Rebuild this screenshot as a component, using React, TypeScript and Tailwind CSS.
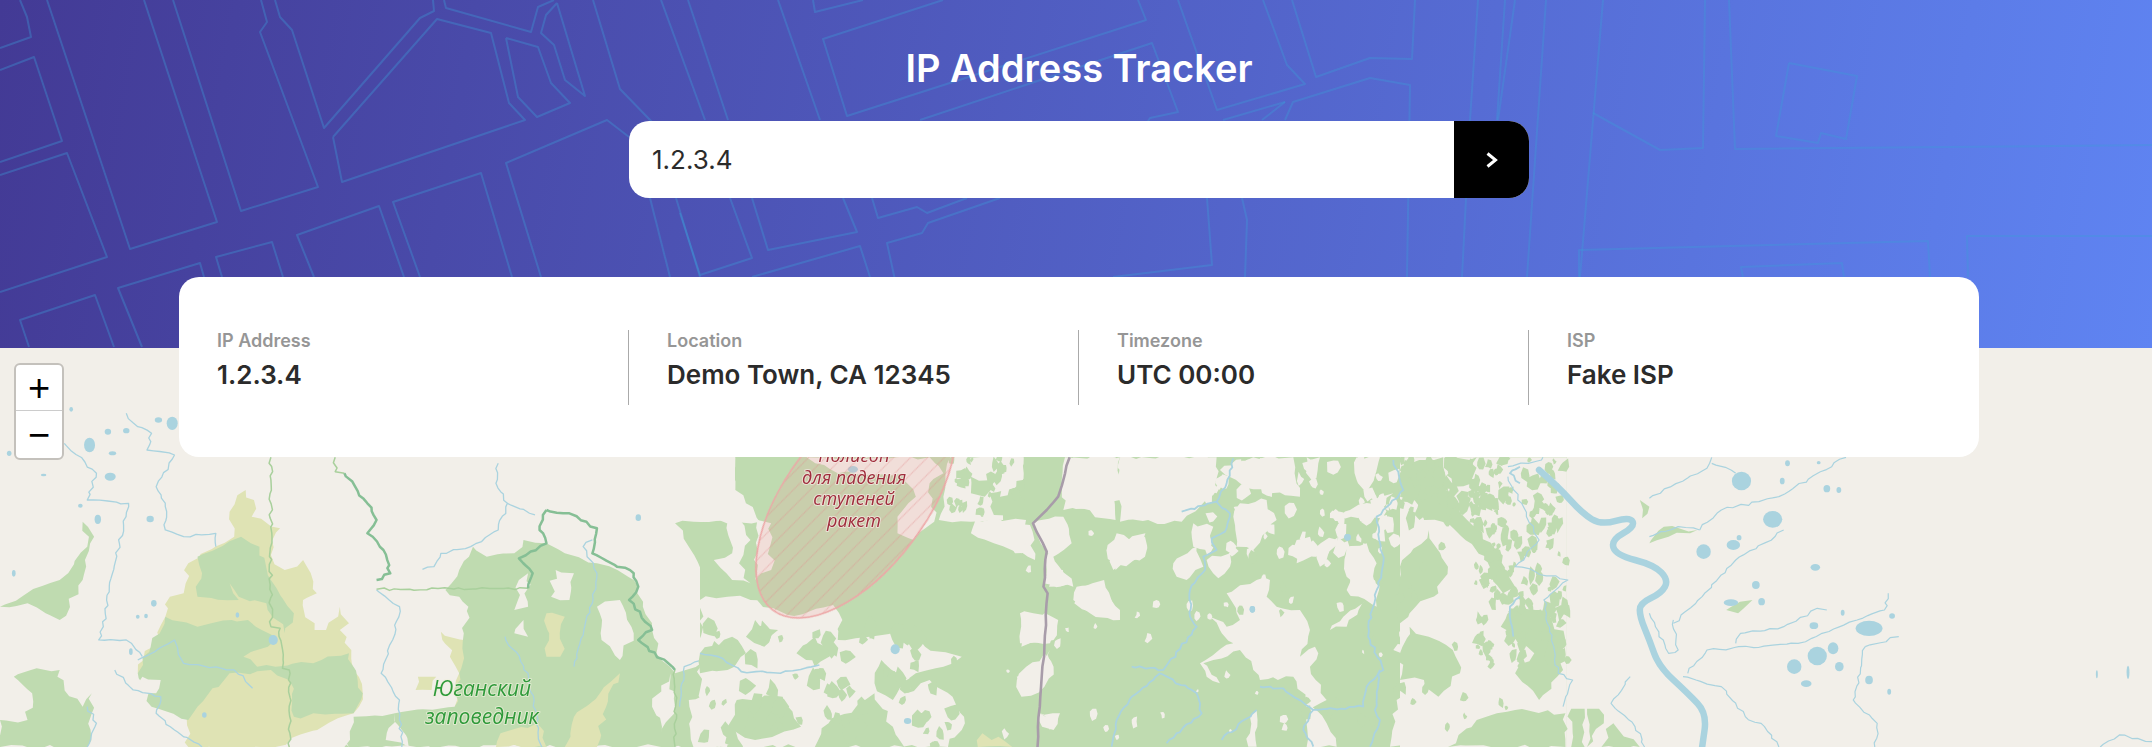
const headerLines = [
  "0,48 31,37 27,17 20,0",
  "0,70 34,57 62,141 0,162",
  "0,175 67,153 107,257 0,292",
  "47,0 130,249 217,222 144,0",
  "173,0 241,211 318,187 260,32 267,22 261,0",
  "275,0 280,17 292,30 324,128 420,18 434,11 433,0",
  "333,137 342,182 525,120 509,103 491,33 437,19 333,137",
  "444,0 446,8 531,32 538,7 554,0",
  "557,3 546,15 541,33 554,45 565,80 585,96 557,3",
  "506,38 538,47 551,83 570,103 537,117 518,97 506,38",
  "593,0 620,89 652,122",
  "661,0 705,120",
  "688,0 728,120",
  "778,0 820,120",
  "813,0 815,12 863,0",
  "943,0 823,39 847,116 1146,20 1138,0",
  "920,120 1152,43 1178,112 1150,118 1148,121",
  "730,198 752,258 700,275 680,213",
  "752,198 768,250 857,232 843,198",
  "872,198 878,218 917,207 927,213 967,198",
  "1000,198 928,223 922,233 887,243 895,280",
  "752,277 860,246 870,277",
  "541,277 506,163 607,120 629,137",
  "512,277 481,173 393,202 420,277",
  "404,277 379,206 297,235 314,277",
  "283,277 272,242 216,257 222,277",
  "204,277 200,263 118,288 142,347",
  "114,347 95,295 20,320 29,347",
  "650,198 670,277",
  "676,198 700,277",
  "1178,0 1217,110 1305,84 1287,65 1263,0",
  "1292,0 1316,77 1370,58 1412,59 1415,0",
  "1285,120 1293,102 1370,78 1410,85 1407,277",
  "1285,102 1262,120",
  "1285,102 1223,120",
  "1207,198 1212,265 1113,277",
  "1242,198 1247,220 1245,277",
  "1478,0 1470,120 1462,277",
  "1505,0 1497,120",
  "1515,0 1498,120",
  "1546,0 1527,277",
  "1603,0 1580,277",
  "1593,113 1660,150 1703,148 1705,0",
  "1729,0 1735,149 2152,145",
  "1789,63 1857,76 1846,139 1821,133 1818,143 1776,136 1789,63",
  "1579,277 1579,250 1928,241 1930,277",
  "1743,277 1741,267 1842,263 1844,277",
  "1968,277 1967,236 2152,236",
];

// little seeded generator, the speckles have to stay put between runs
function makeRandom(seed: number) {
  let s = seed;
  return () => {
    s = (s * 16807) % 2147483647;
    return (s - 1) / 2147483646;
  };
}

function blobPath(rand: () => number, cx: number, cy: number, r: number) {
  const n = 7;
  let d = "";
  for (let i = 0; i < n; i++) {
    const a = (i / n) * Math.PI * 2;
    const rr = r * (0.5 + rand() * 0.8);
    d += `${i === 0 ? "M" : "L"}${(cx + Math.cos(a) * rr).toFixed(1)} ${(cy + Math.sin(a) * rr * 1.4).toFixed(1)}`;
  }
  return d + "Z";
}

function speckles(seed: number, x: number, y: number, w: number, h: number, count: number, size: number) {
  const rand = makeRandom(seed);
  let d = "";
  for (let i = 0; i < count; i++) {
    d += blobPath(rand, x + rand() * w, y + rand() * h, size * (0.4 + rand()));
  }
  return d;
}

function parsePoints(points: string) {
  return points.split(" ").map((p) => p.split(",").map(Number));
}

// breaks straight edges up so forest borders and rivers look natural
function roughPath(points: string, seed: number, amp: number, step: number, closed: boolean) {
  const rand = makeRandom(seed * 97 + 13);
  const pts = parsePoints(points);
  const count = closed ? pts.length : pts.length - 1;
  let d = `M${pts[0][0]} ${pts[0][1]}`;
  for (let i = 0; i < count; i++) {
    const [x1, y1] = pts[i];
    const [x2, y2] = pts[(i + 1) % pts.length];
    const segs = Math.max(1, Math.round(Math.hypot(x2 - x1, y2 - y1) / step));
    for (let k = 1; k <= segs; k++) {
      const t = k / segs;
      const jitter = k === segs ? 0 : amp;
      const px = x1 + (x2 - x1) * t + (rand() - 0.5) * 2 * jitter;
      const py = y1 + (y2 - y1) * t + (rand() - 0.5) * 2 * jitter;
      d += `L${px.toFixed(1)} ${py.toFixed(1)}`;
    }
  }
  return closed ? d + "Z" : d;
}

function smoothPath(points: string) {
  const pts = parsePoints(points);
  let d = `M${pts[0][0]} ${pts[0][1]}`;
  for (let i = 1; i < pts.length - 1; i++) {
    const mx = (pts[i][0] + pts[i + 1][0]) / 2;
    const my = (pts[i][1] + pts[i + 1][1]) / 2;
    d += `Q${pts[i][0]} ${pts[i][1]} ${mx} ${my}`;
  }
  const last = pts[pts.length - 1];
  return d + `L${last[0]} ${last[1]}`;
}

const LAND = "#f2efe9";
const FOREST = "#bfdbb0";
const SCRUB = "#dfe3b4";
const WATER = "#aad3df";

const leftScrub = [
  "535,450 553,480 548,530 610,565 590,645 620,690 660,660 690,760 660,780 685,870 710,870 740,800 760,850 740,870 765,930 790,1060 770,1120 600,1221 410,1221 400,1100 300,1000 360,830 370,770 400,760 410,670 510,590 500,515",
  "960,875 1010,900 1020,1000 1010,1100 990,1100 1000,1000",
  "910,1010 950,1010 940,1050 905,1050",
];
const leftForest = [
  "430,650 525,590 565,620 590,720 640,820 620,880 580,790 520,770 500,730 520,780 430,770 440,700",
  "360,830 430,860 460,850 540,840 570,870 600,900 560,930 530,950 560,980 600,980 700,960 760,940 790,1060 770,1120 640,1130 630,1020 590,990 500,1000 430,1100 410,1140 330,1100 300,1000",
  "1030,620 1060,650 1120,640 1140,600 1190,610 1230,640 1300,670 1380,720 1400,800 1420,870 1440,960 1470,1000 1568,950 1568,1221 750,1221 770,1130 860,1120 990,1100 1000,1000 1010,880 1020,800 1000,770 970,750 1000,690",
  "1470,550 1590,545 1590,820 1530,700 1500,620",
  "0,800 130,720 190,620 180,545 205,590 185,660 180,720 130,840 60,790",
  "30,1010 80,985 130,990 125,1010 180,1100 200,1060 190,1221 0,1221 0,1140 60,1140 70,1060",
];
const leftLand = [
  "1210,690 1250,700 1240,780 1200,770",
  "1130,720 1150,700 1150,800 1120,810",
  "1300,800 1350,780 1380,880 1350,960 1310,900",
  "1120,880 1140,840 1150,890",
  "860,1120 890,1221 840,1200",
  "730,1180 750,1130 760,1221",
  "1420,1100 1460,1000 1470,1100 1440,1180",
  "1500,1080 1568,1050 1568,1221 1510,1221",
  "310,1010 350,1020 340,1060 290,1060",
];
const leftScrubTop = [
  "1190,820 1230,830 1220,950 1190,950",
  "1250,1130 1350,1000 1320,1100 1300,1221 1230,1221",
  "1090,1180 1170,1150 1190,1221 1080,1221",
];
const leftRivers = [
  "140,310 210,400 190,480 280,490 260,610 245,700 225,860 215,900 275,900 310,950",
  "275,220 300,260 330,280 320,330 380,345 340,440 360,500 360,570 400,590 470,580 470,620",
  "1085,370 1080,430 1105,490 1085,570 1025,620 960,640 945,680 920,688",
  "1105,490 1165,525",
  "820,750 870,800 855,900 830,1000 870,1080 875,1221",
  "300,960 380,900 400,970 510,990 550,1045",
  "250,990 290,1050 350,1070 340,1120 380,1170 440,1221",
  "1100,890 1150,1000 1180,1221",
  "1290,600 1270,620 1300,700 1290,790 1250,980",
  "1568,930 1490,980 1480,1100",
  "190,1100 210,1150 190,1221",
];
const leftBoundary = [
  "750,400 800,490 820,540 800,580 835,630 850,700 820,720",
  "1190,510 1240,520 1300,565 1290,640 1380,700 1390,740 1370,780 1420,870 1390,900 1470,990",
  "1190,510 1175,570 1190,610 1130,655 1160,700 1150,745",
];
const leftStraight = ["1150,745 820,748", "590,352 590,860 610,865 615,985 630,990 630,1221", "730,352 730,395 750,400", "1470,990 1470,1221"];
const leftLakes = [
  [213, 538, 7, 14], [195, 315, 12, 22], [245, 340, 8, 6], [235, 275, 7, 9], [275, 272, 7, 8], [345, 240, 8, 8], [375, 250, 12, 20],
  [327, 537, 8, 10], [595, 900, 10, 15], [240, 410, 12, 12], [1390, 533, 6, 10], [335, 790, 6, 10], [517, 825, 4, 8], [300, 830, 4, 6],
  [318, 828, 4, 7], [20, 340, 5, 8], [155, 208, 4, 7], [95, 405, 6, 4], [175, 497, 5, 6], [30, 700, 4, 10], [285, 935, 4, 10], [445, 1125, 5, 8],
];

const midLand = [
  "0,52 77,52 77,150 100,190 130,245 0,245",
  "0,480 60,470 110,480 160,505 205,528 290,495 310,540 300,600 370,590 425,575 490,620 570,650 530,680 470,700 450,760 500,720 550,770 575,830 570,870 540,921 0,921",
  "60,245 90,245 110,300 85,370 110,430 70,420 30,360 70,340",
  "232,52 500,52 530,100 500,130 510,245 465,300 430,280 430,230 470,170 440,100 300,100",
  "125,240 155,250 155,390 120,420",
  "545,52 705,52 705,100 660,240 590,245 520,240 530,170",
  "600,240 710,240 700,340 640,310 590,280",
  "700,550 750,520 780,540 770,600 700,620",
  "690,720 750,640 770,680 750,740 700,770",
  "755,400 790,390 810,430 760,440",
  "740,820 780,830 770,870 745,860",
  "820,450 880,420 915,530 860,520 815,490",
  "885,330 925,310 970,280 965,350 905,390",
  "800,60 905,52 905,240 810,200",
];
const midForest = [
  "380,760 420,860 445,921 250,921 280,850 340,800",
  "0,640 70,590 100,640 60,690 0,700",
  "120,540 170,570 140,620 100,590",
  "250,590 290,640 250,680 210,640",
  "80,780 180,770 220,860 120,900 60,860",
  "395,660 450,720 420,780 380,730",
  "590,110 640,120 620,170 590,160",
  "630,160 700,140 700,230 640,225",
  "340,130 430,130 420,230 400,290 340,240",
];
const midScrub = ["605,921 615,880 635,900 650,890 680,921"];
const midLakes = [
  [333, 88, 11, 10], [425, 628, 10, 15], [452, 843, 8, 9],
  [1203, 508, 6, 10], [1410, 292, 7, 10],
];

const eastLand = [
  "360,22 650,22 650,120 545,215 360,215",
  "0,22 70,22 70,100 0,140",
  "195,22 360,22 360,150 300,180 190,180",
  "100,220 190,200 215,280 160,320 220,410 130,400 145,310 95,220",
  "0,220 90,225 105,330 45,310",
  "680,430 770,390 810,390 800,440 830,470 900,480 930,540 900,620 945,590 955,610 930,650 980,750 930,780 880,680 780,690 760,660 720,600 640,630 610,640 660,700 620,680 600,640 700,580 660,540 630,500 680,530 720,510",
  "1040,290 1100,280 1130,340 1120,420 1070,430 1040,380",
  "230,410 300,410 360,480 360,510 270,490 220,450",
  "60,490 100,490 170,510 150,580 60,580",
  "50,680 130,640 150,600 150,660 130,690 60,730",
  "320,300 350,250 390,270 435,260 435,320 340,360",
  "520,340 590,290 610,350 560,390 530,380",
  "620,330 690,310 690,350 655,385",
  "580,220 640,230 620,300 580,290",
  "700,200 720,160 800,150 830,210 760,300 710,290",
  "1300,220 1380,260 1500,330 1560,400 1560,600 1530,650 1560,700 1560,890 1170,890 1190,750 1300,720 1370,650 1350,620 1240,620 1180,600 1300,540 1320,460 1240,500 1280,400 1340,370 1340,320",
  "990,540 1040,530 1100,450 1030,500",
  "1070,22 1140,22 1130,60 1100,140 1070,90",
  "890,270 930,260 950,320 890,340",
  "950,290 1030,250 960,350",
  "660,60 760,22 880,22 900,140 810,130 720,100",
  "920,22 960,22 930,120",
  "1240,22 1420,22 1380,110 1260,130",
  "1180,130 1050,180 1020,200 1120,200",
  "920,750 980,820 1010,890 920,890",
  "1060,350 1140,400 1130,470 1040,420",
  "120,790 180,790 150,840",
  "750,800 770,780 770,890 745,890",
];
const eastRivers = [
  "545,185 650,155 680,100 700,25",
  "650,155 690,190 675,245 635,265 650,300 610,320 615,360 570,420 570,500 590,530 490,660 395,650",
  "480,670 590,730 605,790 500,880",
  "480,670 395,740 350,810 335,890",
  "780,710 850,715 940,780 1090,770 1100,710 1150,660 1110,570 1105,530 1150,340 1130,200 1210,120 1180,30",
  "940,780 910,840 940,890",
  "1140,660 1125,780 1140,810 1110,890",
  "770,780 665,870",
  "1560,50 1530,70 1560,100",
  "1560,440 1530,470 1540,560",
];

const farGreen = [
  "30,180 100,150 140,240 200,330 240,440 215,460 180,350 100,250 50,240",
  "100,60 160,52 150,130 110,140",
  "20,560 60,590 110,630 125,700 80,770 50,720 0,720 0,640",
  "60,270 100,380 80,460 20,520 0,550 0,380",
  "240,500 300,520 345,600 340,690 290,780 240,700 280,640 210,560",
  "240,810 345,820 345,921 100,921 160,840",
  "0,100 40,60 90,52 100,150 30,180 0,170",
  "357,806 385,806 385,921 357,921",
  "390,806 415,806 425,850 390,921",
  "445,850 500,921 420,921",
  "520,310 550,260 620,270 560,290",
  "500,180 520,200 505,235",
  "680,510 735,480 705,520",
];
const farLakes = [
  [712, 123, 20, 28], [777, 238, 20, 25], [633, 335, 15, 22], [695, 315, 14, 15], [707, 293, 5, 8], [870, 648, 20, 28], [903, 625, 11, 18],
  [822, 680, 15, 22], [916, 680, 9, 14], [978, 565, 28, 23], [1026, 528, 6, 8], [863, 557, 9, 10], [742, 435, 8, 12], [754, 485, 7, 11],
  [866, 382, 10, 10], [690, 488, 15, 10], [978, 720, 8, 13], [847, 731, 11, 10], [890, 146, 7, 11], [915, 150, 5, 9], [797, 123, 5, 10],
  [1020, 755, 4, 9], [923, 518, 4, 9], [808, 70, 5, 9], [873, 68, 4, 5], [1518, 697, 3, 20], [1453, 703, 2, 12],
];
const farRivers = [
  "225,80 295,60 298,52",
  "520,175 640,85 650,52",
  "650,70 700,100",
  "625,270 670,210 790,170 930,52",
  "520,290 580,260 625,270",
  "800,270 700,360 630,470 570,550",
  "570,540 580,630 560,640 520,520",
  "600,700 640,630 830,610 880,580 1010,510 1018,460",
  "700,610 710,580 800,560 870,505 890,510",
  "970,620 1040,590",
  "970,620 945,780 995,850 990,921",
  "590,710 670,740 720,830 760,860 790,921",
  "480,710 440,790 490,860 510,921",
  "1460,921 1500,885 1568,905",
  "225,110 290,300 240,380 350,420 300,480 330,700 360,720 340,800",
];
const obRiver = "290,90 330,140 380,220 420,255 480,230 490,260 440,300 450,345 530,375 560,420 545,460 500,490 500,530 520,600 540,680 600,760 640,820 630,921";

const forestHoles = speckles(23, 1200, 457, 200, 95, 70, 5);
const forestDots = speckles(37, 1478, 457, 89, 210, 170, 4.5);
const upperDots = speckles(43, 1400, 457, 80, 70, 50, 5);
const topDots = speckles(51, 950, 458, 75, 62, 30, 4);
const centerDots = speckles(71, 1240, 545, 290, 190, 36, 4);
const bandDots = speckles(83, 705, 625, 255, 122, 70, 6);
const bandHoles = speckles(91, 1005, 530, 400, 210, 40, 3);

function Lines({ items, stroke, width, seed = 1 }: { items: string[]; stroke: string; width: number; seed?: number }) {
  return (
    <>
      {items.map((p, i) => (
        <path
          key={i}
          d={roughPath(p, seed + i, 4, 14, false)}
          fill="none"
          stroke={stroke}
          strokeWidth={width}
          strokeLinejoin="round"
          vectorEffect="non-scaling-stroke"
        />
      ))}
    </>
  );
}

function Fills({ items, fill, seed = 1 }: { items: string[]; fill: string; seed?: number }) {
  return (
    <>
      {items.map((p, i) => (
        <path key={i} d={roughPath(p, seed + i, 8, 22, true)} fill={fill} />
      ))}
    </>
  );
}

function Lakes({ items }: { items: number[][] }) {
  return (
    <>
      {items.map(([cx, cy, rx, ry], i) => (
        <ellipse key={i} cx={cx} cy={cy} rx={rx} ry={ry} fill={WATER} />
      ))}
    </>
  );
}

function MapDrawing() {
  return (
    <svg className="block h-full w-full" viewBox="0 348 2152 399" preserveAspectRatio="none">
      <defs>
        <pattern id="stripes" width="12" height="12" patternUnits="userSpaceOnUse" patternTransform="rotate(98)">
          <rect width="12" height="12" fill="#f09a9a" fillOpacity="0.2" />
          <rect width="1" height="12" fill="#e08e8e" fillOpacity="0.4" />
        </pattern>
        <filter id="soft">
          <feGaussianBlur stdDeviation="0.7" />
        </filter>
      </defs>
      <rect x="0" y="348" width="2152" height="399" fill={LAND} />
      <g filter="url(#soft)">
        <rect x="735" y="457" width="832" height="290" fill={FOREST} />
        <rect x="700" y="522" width="40" height="225" fill={FOREST} />

        <g transform="translate(0 340) scale(0.4592 0.3333)">
          <Fills items={leftScrub} fill={SCRUB} seed={3} />
          <Fills items={leftForest} fill={FOREST} seed={8} />
          <Fills items={leftScrubTop} fill={SCRUB} seed={15} />
          <Fills items={leftLand} fill={LAND} seed={21} />
          <Lines items={leftStraight} stroke="#a9d09c" width={1.5} seed={2} />
          <Lines items={leftBoundary} stroke="#86bf95" width={2.5} seed={7} />
          <Lines items={leftRivers} stroke={WATER} width={1.3} seed={11} />
          <Lakes items={leftLakes} />
        </g>

        <g transform="translate(700 440) scale(0.4592 0.3333)">
          <Fills items={midLand} fill={LAND} seed={31} />
          <Fills items={midForest} fill={FOREST} seed={47} />
          <Fills items={midScrub} fill={SCRUB} seed={59} />
        </g>
        <path d={bandDots} fill={FOREST} />

        <g transform="translate(1000 450) scale(0.3333)">
          <Fills items={eastLand} fill={LAND} seed={61} />
        </g>
        <path d={topDots} fill={FOREST} />
        <path d={forestHoles} fill={LAND} />
        <path d={bandHoles} fill={LAND} />

        <g transform="translate(1400 440) scale(0.4796 0.3333)">
          <polygon points="0,52 348,52 348,921 0,921" fill={LAND} />
          <Fills items={farGreen} fill={FOREST} seed={101} />
        </g>
        <path d={forestDots} fill={FOREST} />
        <path d={upperDots} fill={FOREST} />
        <path d={centerDots} fill={FOREST} />

        <g transform="translate(700 440) scale(0.4592 0.3333)">
          <Lines items={["0,640 40,650 90,695 175,700 260,675"]} stroke={WATER} width={1.6} seed={5} />
          <Lakes items={midLakes} />
        </g>

        <g transform="translate(1000 450) scale(0.3333)">
          <Lines items={eastRivers} stroke={WATER} width={1.8} seed={17} />
          <ellipse cx="757" cy="478" rx="8" ry="10" fill={WATER} />
          <ellipse cx="1043" cy="262" rx="10" ry="10" fill={WATER} />
        </g>

        <g transform="translate(1400 440) scale(0.4796 0.3333)">
          <Lines items={farRivers} stroke={WATER} width={1.2} seed={29} />
          <path d={smoothPath(obRiver)} fill="none" stroke={WATER} strokeWidth={6.5} strokeLinecap="round" vectorEffect="non-scaling-stroke" />
          <Lakes items={farLakes} />
        </g>

        <g transform="translate(700 440) scale(0.4592 0.3333)">
          <path
            d={roughPath("805,52 795,100 780,170 755,210 725,250 755,335 748,440 757,460 750,620 740,800 735,921", 4, 2, 30, false)}
            fill="none"
            stroke="#a89ca9"
            strokeWidth={2.6}
            strokeLinejoin="round"
            vectorEffect="non-scaling-stroke"
          />
        </g>

        <ellipse cx="856" cy="500" rx="138" ry="70" transform="rotate(-53 856 500)" fill="url(#stripes)" stroke="#eda6a6" strokeWidth="1.5" />
      </g>

      <g className="font-['Open_Sans',sans-serif] italic" textAnchor="middle" paintOrder="stroke" strokeLinejoin="round">
        <g className="text-[18px]" fill="#9f2c3c" stroke="#f6ebe6" strokeOpacity="0.7" strokeWidth="2">
          <text x="854" y="462">Полигон</text>
          <text x="854" y="484">для падения</text>
          <text x="854" y="505">ступеней</text>
          <text x="854" y="527">ракет</text>
        </g>
        <g className="text-[21px]" fill="#2f9a3a" stroke="#eef0dc" strokeOpacity="0.7" strokeWidth="2">
          <text x="482" y="696">Юганский</text>
          <text x="482" y="724">заповедник</text>
        </g>
      </g>
    </svg>
  );
}

function StatColumn({ label, value, last }: { label: string; value: string; last?: boolean }) {
  return (
    <div className={last ? "h-[75px] pt-[1px] pr-[38px] pl-[38px]" : "h-[75px] border-r border-[#aaaaaa] pt-[1px] pr-[38px] pl-[38px]"}>
      <p className="text-[18px] leading-[20px] font-semibold text-[#969696]">{label}</p>
      <p className="mt-[7px] text-[26px] leading-[34px] font-semibold text-[#2b2b2b]">{value}</p>
    </div>
  );
}

export default function App() {
  return (
    <div className="relative h-[747px] w-full overflow-hidden bg-[#f2efe9] font-['Inter',sans-serif]">
      <header className="relative flex h-[348px] flex-col items-center bg-[linear-gradient(100deg,#433a95_0%,#5f84f2_100%)] pl-[6px]">
        <svg className="absolute inset-0 h-full w-full" viewBox="0 0 2152 348" preserveAspectRatio="none">
          <g fill="none" stroke="#3e9bd8" strokeOpacity="0.36" strokeWidth="2" strokeLinejoin="round">
            {headerLines.map((p, i) => (
              <polyline key={i} points={p} />
            ))}
          </g>
        </svg>
        <h1 className="relative mt-[46px] text-[38px] leading-[44px] font-semibold text-white">IP Address Tracker</h1>
        <div className="relative mt-[31px] flex h-[77px] w-[900px] overflow-hidden rounded-[20px] bg-white">
          <input
            className="h-full min-w-0 flex-1 px-[23px] text-[26px] text-[#2b2b2b] outline-none"
            defaultValue="1.2.3.4"
            readOnly
          />
          <button className="flex w-[75px] items-center justify-center bg-black">
            <svg width="12" height="16" viewBox="0 0 12 16" fill="none">
              <path d="M1.5 1.5l8 6.5-8 6.5" stroke="#fff" strokeWidth="3" />
            </svg>
          </button>
        </div>
      </header>

      <div className="h-[399px]">
        <MapDrawing />
      </div>

      <div className="absolute top-[363px] left-[14px] w-[50px] rounded-[6px] border-[2px] border-[#c4c1bc] bg-white text-black">
        <div className="flex h-[46px] items-center justify-center border-b border-[#cccccc] pt-[1px] font-['Liberation_Sans',sans-serif] text-[38px]">+</div>
        <div className="flex h-[47px] items-center justify-center pt-[1px] font-['Liberation_Sans',sans-serif] text-[38px]">−</div>
      </div>

      <div className="absolute top-[277px] left-[179px] grid h-[180px] w-[1800px] grid-cols-4 content-start rounded-[20px] bg-white pt-[53px]">
        <StatColumn label="IP Address" value="1.2.3.4" />
        <StatColumn label="Location" value="Demo Town, CA 12345" />
        <StatColumn label="Timezone" value="UTC 00:00" />
        <StatColumn label="ISP" value="Fake ISP" last />
      </div>
    </div>
  );
}
